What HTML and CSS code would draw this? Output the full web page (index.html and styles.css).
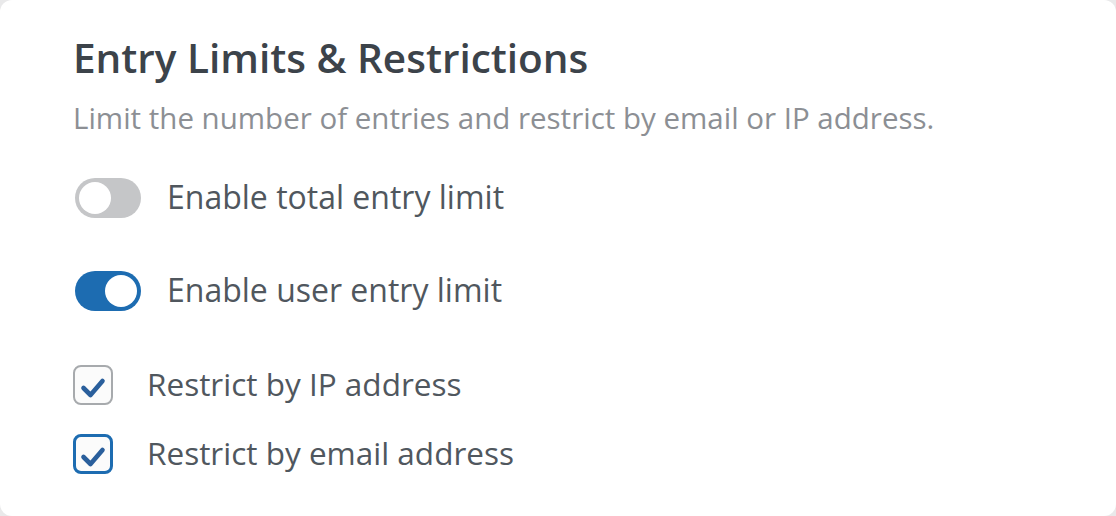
FILE: index.html
```html
<!DOCTYPE html>
<html lang="en">
<head>
    <meta charset="UTF-8">
    <meta name="viewport" content="width=device-width, initial-scale=1.0">
    <title>Entry Limits &amp; Restrictions</title>
    <link rel="stylesheet" href="styles.css">
</head>
<body>

    <div class="settings-card">
        <!-- Header -->
        <h2 class="section-title">Entry Limits &amp; Restrictions</h2>
        <p class="section-desc">Limit the number of entries and restrict by email or IP address.</p>

        <!-- Toggles -->
        <div class="toggle-row first">
            <span class="toggle"><span class="knob"></span></span>
            <span class="row-label">Enable total entry limit</span>
        </div>

        <div class="toggle-row">
            <span class="toggle on"><span class="knob"></span></span>
            <span class="row-label">Enable user entry limit</span>
        </div>

        <!-- Checkboxes -->
        <div class="check-row first">
            <span class="checkbox">
                <svg viewBox="0 0 38 38" width="38" height="38"><path d="M9.5 22 L16.5 29 L28.5 15" fill="none" stroke="#2a5f9c" stroke-width="4.6" stroke-linecap="round" stroke-linejoin="round"/></svg>
            </span>
            <span class="row-label">Restrict by IP address</span>
        </div>

        <div class="check-row">
            <span class="checkbox focused">
                <svg viewBox="0 0 38 38" width="38" height="38"><path d="M9.5 22 L16.5 29 L28.5 15" fill="none" stroke="#2a5f9c" stroke-width="4.6" stroke-linecap="round" stroke-linejoin="round"/></svg>
            </span>
            <span class="row-label">Restrict by email address</span>
        </div>
    </div>

</body>
</html>
```

FILE: styles.css
```css
/* General Styles */
body {
    margin: 0;
    background: #e9e9ea;
    font-family: "Open Sans", "Noto Sans", sans-serif;
}

/* Card */
.settings-card {
    box-sizing: border-box;
    height: 100vh;
    background: white;
    border-radius: 12px;
    padding: 34px 73px 0;
}

.section-title {
    margin: 0;
    font-size: 40.5px;
    font-weight: 600;
    line-height: 48px;
    color: #3c434a;
}

.section-desc {
    margin: 21px 0 0;
    font-size: 29.5px;
    line-height: 30px;
    color: #8c8f94;
}

/* Rows */
.toggle-row,
.check-row {
    display: flex;
    align-items: center;
    height: 40px;
}

.toggle-row {
    gap: 26px;
    margin-top: 53px;
}

.toggle-row.first {
    margin-top: 45px;
}

.check-row {
    gap: 34px;
    margin-top: 29px;
}

.check-row.first {
    margin-top: 54px;
}

.row-label {
    font-size: 32px;
    margin-top: -4px;
    color: #50575e;
}

.check-row .row-label {
    font-size: 31.5px;
}

/* Toggle Switch */
.toggle {
    box-sizing: border-box;
    display: flex;
    align-items: center;
    width: 66px;
    height: 40px;
    padding: 0 4px;
    border-radius: 20px;
    background: #c5c6c8;
    margin-left: 2px;
}

.toggle .knob {
    width: 32px;
    height: 32px;
    border-radius: 50%;
    background: white;
}

.toggle.on {
    background: #1d6cb1;
    justify-content: flex-end;
}

/* Checkbox */
.checkbox {
    box-sizing: border-box;
    position: relative;
    width: 40px;
    height: 40px;
    border: 2px solid #a7aaad;
    border-radius: 8px;
    background: #fbfbfb;
}

.checkbox svg {
    position: absolute;
    left: -1px;
    top: -1px;
}

.checkbox.focused {
    border: 3px solid #1d6cb1;
}

.checkbox.focused svg {
    left: -2px;
    top: -2px;
}
```
